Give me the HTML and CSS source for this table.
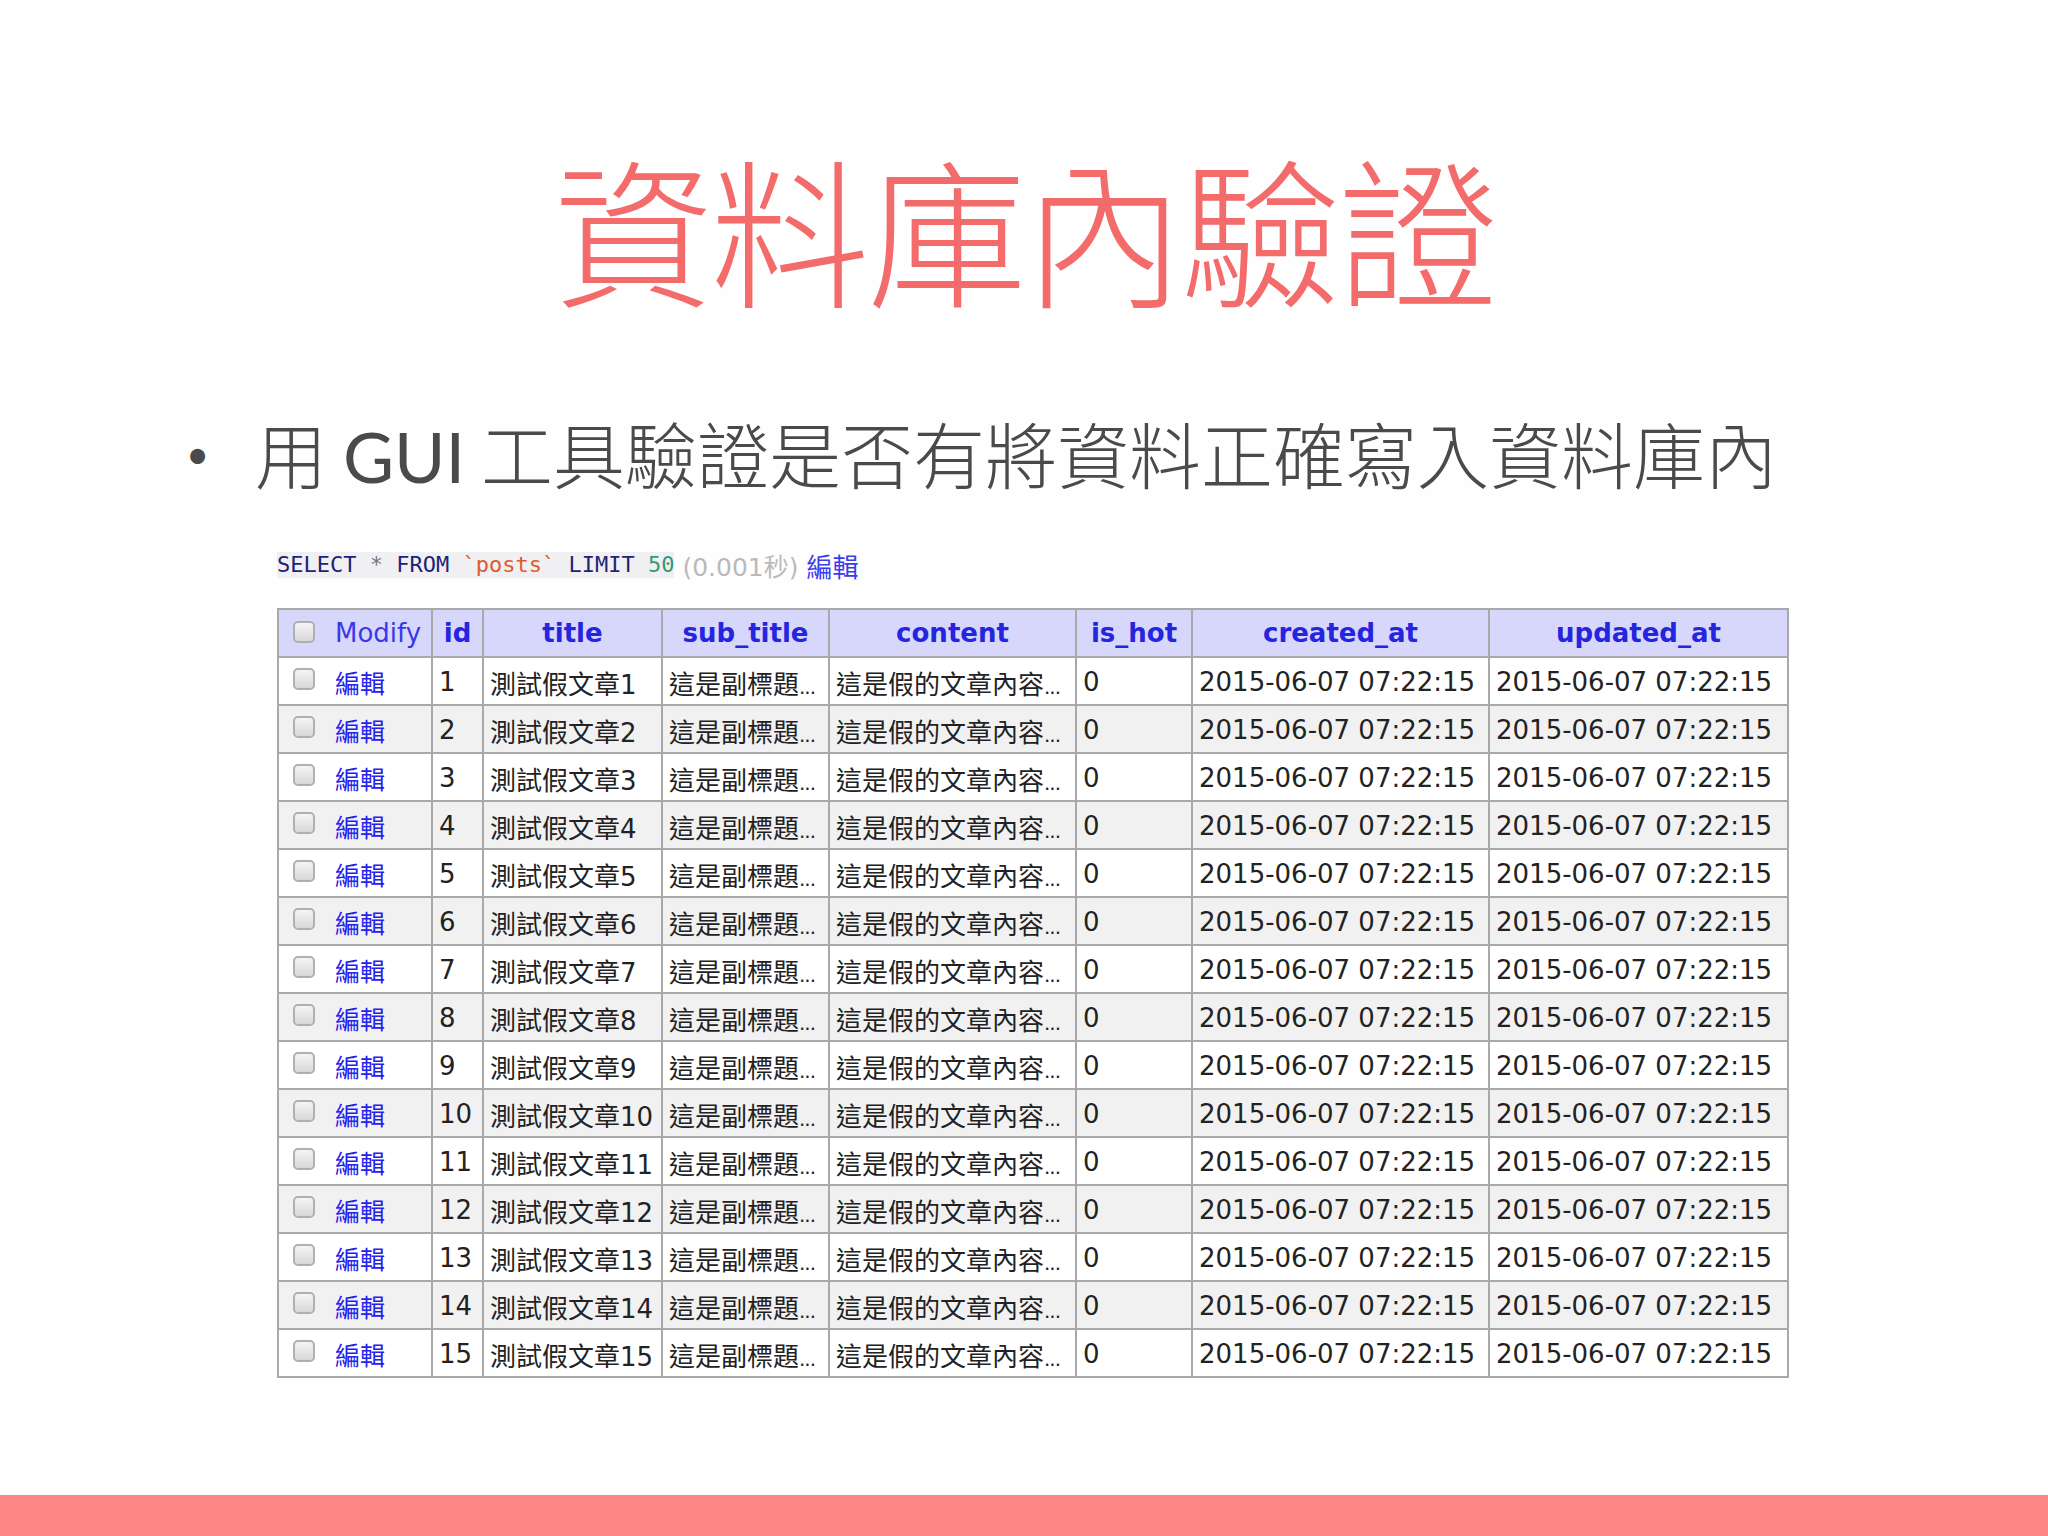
FILE: index.html
```html
<!DOCTYPE html>
<html lang="zh-Hant">
<head>
<meta charset="utf-8">
<title>資料庫內驗證</title>
<link rel="stylesheet" href="styles.css">
</head>
<body>
<div class="slide">
  <h1 class="title">資料庫內驗證</h1>
  <div class="bullet-line">
    <span class="bullet">•</span>
    <span class="bullet-text">用 <span class="latin">GUI</span> 工具驗證是否有將資料正確寫入資料庫內</span>
  </div>
  <div class="shot">
    <div class="sql-line">
      <code class="sql"><span class="kw">SELECT</span> <span class="op">*</span> <span class="kw">FROM</span> <span class="ident">`posts`</span> <span class="kw">LIMIT</span> <span class="num">50</span></code>
      <span class="time">(0.001秒)</span>
      <a class="edit-link">編輯</a>
    </div>
    <table class="grid">
      <colgroup>
        <col class="c-mod"><col class="c-id"><col class="c-title"><col class="c-sub"><col class="c-content"><col class="c-hot"><col class="c-date"><col class="c-date2">
      </colgroup>
      <thead>
        <tr>
          <th class="th-mod"><span class="cb"></span><span class="mod-label">Modify</span></th>
          <th>id</th>
          <th>title</th>
          <th>sub_title</th>
          <th>content</th>
          <th>is_hot</th>
          <th>created_at</th>
          <th>updated_at</th>
        </tr>
      </thead>
      <tbody id="rows"></tbody>
    </table>
  </div>
  <div class="footer-bar"></div>
</div>
<script>
  var tb = document.getElementById('rows');
  var html = '';
  for (var i = 1; i <= 15; i++) {
    html += '<tr>' +
      '<td class="td-mod"><span class="cb"></span><a class="edit">編輯</a></td>' +
      '<td>' + i + '</td>' +
      '<td>測試假文章' + i + '</td>' +
      '<td>這是副標題<span class="ell">...</span></td>' +
      '<td>這是假的文章內容<span class="ell">...</span></td>' +
      '<td>0</td>' +
      '<td>2015-06-07 07:22:15</td>' +
      '<td>2015-06-07 07:22:15</td>' +
      '</tr>';
  }
  tb.innerHTML = html;
</script>
</body>
</html>
```

FILE: styles.css
```css
* { box-sizing: border-box; }
html, body {
  margin: 0;
  padding: 0;
  background: #fefefe;
}
.slide {
  width: 2048px;
  height: 1536px;
  display: flex;
  flex-direction: column;
  overflow: hidden;
}
.title {
  margin: 146px 0 0 0;
  font-family: "Noto Sans CJK TC", sans-serif;
  font-weight: 300;
  font-size: 160px;
  line-height: 1;
  color: #f36b6b;
  text-align: center;
  letter-spacing: -3px;
}
.bullet-line {
  margin-top: 110px;
  display: flex;
  align-items: center;
  padding-left: 186px;
  font-family: "Lato", "Noto Sans CJK TC", sans-serif;
  color: #4a4a4a;
  line-height: 1;
}
.bullet {
  font-size: 40px;
  width: 69px;
}
.bullet-text {
  font-family: "Noto Sans CJK TC", sans-serif;
  font-weight: 300;
  font-size: 72px;
  letter-spacing: 0;
}
.latin {
  font-family: "Lato", sans-serif;
  font-weight: 400;
  font-size: 70px;
  letter-spacing: 0;
}
.shot {
  margin-top: 61px;
  padding-left: 277px;
  display: flex;
  flex-direction: column;
}
.sql-line {
  display: flex;
  align-items: center;
  height: 26px;
  gap: 8px;
}
.sql {
  font-family: "DejaVu Sans Mono", monospace;
  font-size: 22px;
  background: #f0f0f2;
  color: #1d2378;
  white-space: pre;
  line-height: 26px;
}
.sql .op { color: #777; }
.sql .ident { color: #df5a2e; }
.sql .num { color: #33997a; }
.time {
  font-family: "DejaVu Sans", "Noto Sans CJK TC", sans-serif;
  font-size: 25px;
  color: #bababa;
}
.edit-link {
  font-family: "Noto Sans CJK TC", sans-serif;
  font-size: 26px;
  color: #3c3cf0;
}
.grid {
  margin-top: 30px;
  border-collapse: collapse;
  table-layout: fixed;
  width: 1510px;
  font-family: "DejaVu Sans", "Noto Sans CJK TC", sans-serif;
  font-size: 26px;
  color: #222;
  border: 2px solid #a6a6a6;
}
.c-mod { width: 154px; }
.c-id { width: 51px; }
.c-title { width: 179px; }
.c-sub { width: 167px; }
.c-content { width: 247px; }
.c-hot { width: 116px; }
.c-date { width: 297px; }
.c-date2 { width: 299px; }
.grid th, .grid td {
  border: 2px solid #a9a9a9;
  white-space: nowrap;
  overflow: hidden;
}
.grid th {
  height: 48px;
  background: #d7d7fb;
  color: #2525e0;
  font-weight: bold;
  text-align: center;
  padding: 0 4px;
}
.grid td {
  height: 48px;
  padding: 2px 6px 0;
  text-align: left;
}
.grid tbody tr:nth-child(even) td { background: #f1f1f1; }
.grid tbody tr:nth-child(odd) td { background: #ffffff; }
.grid th.th-mod, .grid td.td-mod {
  text-align: left;
  padding-left: 14px;
}
.cb {
  display: inline-block;
  width: 22px;
  height: 22px;
  border: 2px solid #b0b0b0;
  border-radius: 5px;
  background: linear-gradient(#f4f4f4, #d8d8d8);
  vertical-align: middle;
  margin-right: 20px;
  position: relative;
  top: -3px;
}
.mod-label {
  font-weight: normal;
  color: #3838ee;
}
.edit {
  font-family: "Noto Sans CJK TC", sans-serif;
  color: #2323ee;
  font-size: 25px;
  vertical-align: middle;
}
.ell {
  font-size: 20px;
  letter-spacing: -1px;
}
.footer-bar {
  margin-top: auto;
  height: 41px;
  background: #fd8886;
}
```
